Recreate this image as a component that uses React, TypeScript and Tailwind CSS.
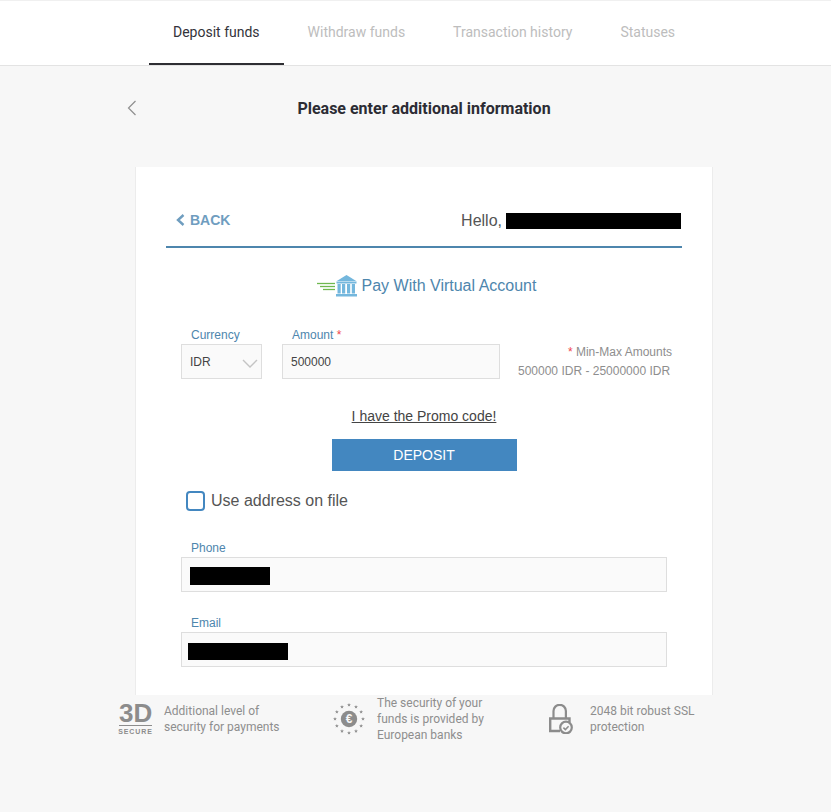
import React from "react";

const roboto = "font-['Roboto',sans-serif]";

function Tab({ label, active }: { label: string; active?: boolean }) {
  return (
    <div
      className={`flex h-[64px] items-center px-6 text-[14px] ${
        active ? "border-b-2 border-[#2e2e33] text-[#33333a]" : "border-b-2 border-transparent text-[#bdbdbd]"
      }`}
    >
      <span>{label}</span>
    </div>
  );
}

function starPoints(cx: number, cy: number, R: number) {
  const pts: string[] = [];
  for (let i = 0; i < 10; i++) {
    const r = i % 2 === 0 ? R : R * 0.42;
    const a = -Math.PI / 2 + (i * Math.PI) / 5;
    pts.push(`${(cx + r * Math.cos(a)).toFixed(2)},${(cy + r * Math.sin(a)).toFixed(2)}`);
  }
  return pts.join(" ");
}

function EuroIcon() {
  const stars = Array.from({ length: 12 }, (_, i) => {
    const a = (i * Math.PI) / 6;
    return { x: 16 + 14 * Math.cos(a), y: 16 + 14 * Math.sin(a) };
  });
  return (
    <div className="relative h-8 w-8 shrink-0">
      <svg width="32" height="32" viewBox="0 0 32 32">
        {stars.map((s, i) => (
          <polygon key={i} points={starPoints(s.x, s.y, 2)} fill="#8c8c8c" />
        ))}
        <circle cx="16" cy="16" r="8.2" fill="#8c8c8c" />
      </svg>
      <span className="absolute inset-0 flex items-center justify-center font-['Liberation_Sans',sans-serif] text-[12px] font-bold text-[#f7f7f7]">
        €
      </span>
    </div>
  );
}

function LockIcon() {
  return (
    <svg width="24" height="30" viewBox="0 0 24 30" fill="none" className="shrink-0">
      <path d="M4.5 15V7a6.2 6.2 0 0 1 12.4 0v8" stroke="#8c8c8c" strokeWidth="2.2" />
      <path d="M11 27H1.2V14.5h19.3v4" stroke="#8c8c8c" strokeWidth="2.4" />
      <circle cx="17" cy="23.5" r="5.8" fill="#f7f7f7" stroke="#8c8c8c" strokeWidth="2.2" />
      <path d="M14.4 23.6l2 2 3.2-3.4" stroke="#8c8c8c" strokeWidth="1.5" />
    </svg>
  );
}

function BankIcon() {
  return (
    <svg width="40" height="22" viewBox="0 0 40 22" className="shrink-0">
      <g stroke="#6fb84f" strokeWidth="1.3">
        <path d="M0 8.5h18" />
        <path d="M3 11.5h15" />
        <path d="M6 14.5h12" />
      </g>
      <path d="M29.5 0L40 6.5H19z" fill="#74b7dd" />
      <rect x="19.5" y="7" width="20" height="1.5" fill="#74b7dd" />
      <g fill="#74b7dd">
        <rect x="20.5" y="9" width="3.2" height="9.5" />
        <rect x="25" y="9" width="3.2" height="9.5" />
        <rect x="30" y="9" width="3.2" height="9.5" />
        <rect x="34.8" y="9" width="3.2" height="9.5" />
        <rect x="19" y="19" width="21" height="2.5" />
      </g>
    </svg>
  );
}

export default function App() {
  return (
    <div className="min-h-[812px] w-[831px] bg-[#f7f7f7] font-['Liberation_Sans',sans-serif]">
      <header className={`flex h-[66px] border-y border-t-[#f0f0f0] border-b-[#e3e3e3] bg-white pl-[149px] ${roboto}`}>
        <Tab label="Deposit funds" active />
        <Tab label="Withdraw funds" />
        <Tab label="Transaction history" />
        <Tab label="Statuses" />
      </header>

      <div className={`relative flex h-[101px] justify-center pt-[33px] ${roboto}`}>
        <svg width="10" height="16" viewBox="0 0 10 16" fill="none" className="absolute left-[127px] top-[34px]">
          <path d="M8.5 1L1.5 8l7 7" stroke="#8f8f8f" strokeWidth="1.2" />
        </svg>
        <h1 className="ml-[17px] text-[16px] leading-[20px] font-bold text-[#2c2c34]">Please enter additional information</h1>
      </div>

      <main className="ml-[135px] h-[528px] w-[578px] border-x border-[#ececec] bg-white px-[30px]">
        <div className="flex h-[81px] items-start justify-between border-b-2 border-[#4e86ad] pt-[43px]">
          <div className="ml-[10px] flex items-center gap-[5px] text-[14px] leading-[20px] font-bold text-[#6f9dbf]">
            <svg width="9" height="12" viewBox="0 0 9 12" fill="none">
              <path d="M7.5 1L2 6l5.5 5" stroke="#6f9dbf" strokeWidth="2.4" />
            </svg>
            BACK
          </div>
          <div className="flex items-center pr-px pt-[1px]">
            <span className="mr-[4px] text-[16px] leading-[20px] text-[#555]">Hello,</span>
            <div className="h-[16px] w-[175px] bg-black" />
          </div>
        </div>

        <div className="mt-[26px] flex h-[24px] items-center justify-center gap-[5px] pl-[5px]">
          <BankIcon />
          <span className="text-[16px] leading-[24px] text-[#4e86ad]">Pay With Virtual Account</span>
        </div>

        <div className="mt-[30px] flex h-[51px] px-[15px]">
          <div className="w-[81px] shrink-0">
            <div className="h-[16px] pl-[10px] text-[12px] leading-[14px] text-[#4e86ad]">Currency</div>
            <div className="flex h-[35px] items-center justify-between border border-[#dedede] bg-[#fafafa] pl-[8px] pr-[3px] text-[12px] text-[#444]">
              IDR
              <svg width="16" height="10" viewBox="0 0 16 10" fill="none" className="mt-[4px]">
                <path d="M1 1l7 7 7-7" stroke="#c4c4c4" strokeWidth="1.4" />
              </svg>
            </div>
          </div>
          <div className="ml-[20px] w-[218px] shrink-0">
            <div className="h-[16px] pl-[10px] text-[12px] leading-[14px] text-[#4e86ad]">
              Amount <span className="text-[#f0484e]">*</span>
            </div>
            <div className="flex h-[35px] items-center border border-[#dedede] bg-[#fafafa] pl-[8px] text-[12px] text-[#444]">
              500000
            </div>
          </div>
          <div className="ml-[18px] flex w-[154px] shrink-0 flex-col pt-[15px] text-[12px] leading-[19px] whitespace-nowrap text-[#8e8e8e]">
            <div className="text-right">
              <span className="text-[#f0484e]">*</span> Min-Max Amounts
            </div>
            <div className="pr-[3px] text-right">500000 IDR - 25000000 IDR</div>
          </div>
        </div>

        <div className="mt-[28px] text-center text-[14px] leading-[18px] text-[#444] underline">I have the Promo code!</div>

        <button className="mx-auto mt-[14px] flex h-[32px] w-[185px] items-center justify-center bg-[#4387c0] text-[14px] text-white">
          DEPOSIT
        </button>

        <div className="mt-[20px] flex items-center gap-[6px] pl-[20px]">
          <div className="h-[20px] w-[19px] rounded-[4px] border-2 border-[#4387c0] bg-white" />
          <span className="text-[16px] leading-[20px] text-[#555]">Use address on file</span>
        </div>

        <div className="mt-[30px] px-[15px]">
          <div className="h-[16px] pl-[10px] text-[12px] leading-[14px] text-[#4e86ad]">Phone</div>
          <div className="flex h-[35px] items-center border border-[#dedede] bg-[#fafafa] pl-[8px]">
            <div className="mt-[3px] h-[18px] w-[80px] bg-black" />
          </div>
        </div>

        <div className="mt-[24px] px-[15px]">
          <div className="h-[16px] pl-[10px] text-[12px] leading-[14px] text-[#4e86ad]">Email</div>
          <div className="flex h-[35px] items-center border border-[#dedede] bg-[#fafafa] pl-[6px]">
            <div className="mt-[3px] h-[17px] w-[100px] bg-black" />
          </div>
        </div>
      </main>

      <footer className={`flex pl-[119px] text-[12px] leading-[16px] text-[#8e8e8e] ${roboto}`}>
        <div className="flex h-[48px] w-[214px] items-center gap-[12px]">
          <div className="flex w-[33px] flex-col items-center font-['Liberation_Sans',sans-serif] text-[#8c8c8c]">
            <span className="w-[33px] border-b border-[#8c8c8c] pb-[1px] text-center text-[26px] leading-[21px] font-bold">3D</span>
            <span className="mt-[2px] text-[7px] leading-[7px] font-bold tracking-[0.9px] whitespace-nowrap">SECURE</span>
          </div>
          <div>
            Additional level of
            <br />
            security for payments
          </div>
        </div>
        <div className="flex h-[48px] w-[216px] items-center gap-[12px]">
          <EuroIcon />
          <div>
            The security of your
            <br />
            funds is provided by
            <br />
            European banks
          </div>
        </div>
        <div className="flex h-[48px] items-center gap-[17px]">
          <LockIcon />
          <div>
            2048 bit robust SSL
            <br />
            protection
          </div>
        </div>
      </footer>
    </div>
  );
}
